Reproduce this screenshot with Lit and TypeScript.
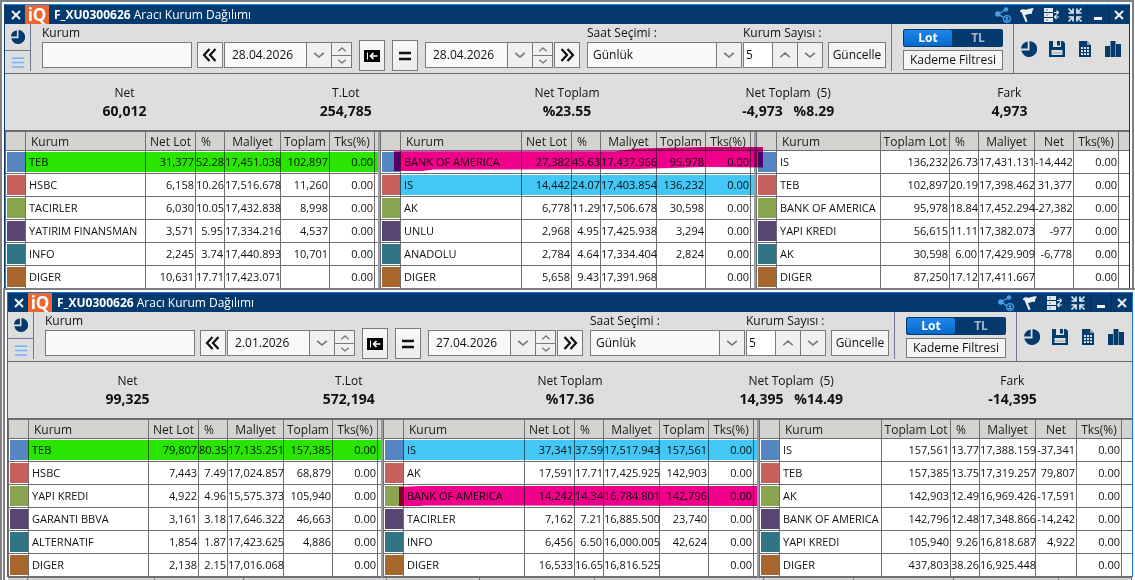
import { LitElement, html, svg, css } from "lit";
import { customElement, property } from "lit/decorators.js";
import { classMap } from "lit/directives/class-map.js";

type Mark = { row: number; shape: "green" | "cyan" | "pink" | "pink-brush" };
type Panel = { kind: "net" | "total"; netWidth: number; rows: string[][]; marks: Mark[] };
type Board = {
  id: string;
  start: string;
  end: string;
  summary: [string, string][];
  panels: Panel[];
};

const NET_HEADS = ["Kurum", "Net Lot", "%", "Maliyet", "Toplam", "Tks(%)"];
const TOTAL_HEADS = ["Kurum", "Toplam Lot", "%", "Maliyet", "Net", "Tks(%)"];
const SWATCHES = ["blue", "red", "green", "purple", "teal", "brown"];

const BOARDS: Board[] = [
  {
    id: "a",
    start: "28.04.2026",
    end: "28.04.2026",
    summary: [
      ["Net", "60,012"],
      ["T.Lot", "254,785"],
      ["Net Toplam", "%23.55"],
      ["Net Toplam  (5)", "-4,973   %8.29"],
      ["Fark", "4,973"],
    ],
    panels: [
      {
        kind: "net",
        netWidth: 0,
        marks: [{ row: 0, shape: "green" }],
        rows: [
          ["TEB", "31,377", "52.28", "17,451.038", "102,897", "0.00"],
          ["HSBC", "6,158", "10.26", "17,516.678", "11,260", "0.00"],
          ["TACIRLER", "6,030", "10.05", "17,432.838", "8,998", "0.00"],
          ["YATIRIM FINANSMAN", "3,571", "5.95", "17,334.216", "4,537", "0.00"],
          ["INFO", "2,245", "3.74", "17,440.893", "10,701", "0.00"],
          ["DIGER", "10,631", "17.71", "17,423.071", "", "0.00"],
        ],
      },
      {
        kind: "net",
        netWidth: 0,
        marks: [{ row: 0, shape: "pink-brush" }, { row: 1, shape: "cyan" }],
        rows: [
          ["BANK OF AMERICA", "27,382", "45.63", "17,437.966", "95,978", "0.00"],
          ["IS", "14,442", "24.07", "17,403.854", "136,232", "0.00"],
          ["AK", "6,778", "11.29", "17,506.678", "30,598", "0.00"],
          ["UNLU", "2,968", "4.95", "17,425.938", "3,294", "0.00"],
          ["ANADOLU", "2,784", "4.64", "17,334.404", "2,824", "0.00"],
          ["DIGER", "5,658", "9.43", "17,391.968", "", "0.00"],
        ],
      },
      {
        kind: "total",
        netWidth: 39,
        marks: [],
        rows: [
          ["IS", "136,232", "26.73", "17,431.131", "-14,442", "0.00"],
          ["TEB", "102,897", "20.19", "17,398.462", "31,377", "0.00"],
          ["BANK OF AMERICA", "95,978", "18.84", "17,452.294", "-27,382", "0.00"],
          ["YAPI KREDI", "56,615", "11.11", "17,382.073", "-977", "0.00"],
          ["AK", "30,598", "6.00", "17,429.909", "-6,778", "0.00"],
          ["DIGER", "87,250", "17.12", "17,411.667", "", "0.00"],
        ],
      },
    ],
  },
  {
    id: "b",
    start: "2.01.2026",
    end: "27.04.2026",
    summary: [
      ["Net", "99,325"],
      ["T.Lot", "572,194"],
      ["Net Toplam", "%17.36"],
      ["Net Toplam  (5)", "14,395   %14.49"],
      ["Fark", "-14,395"],
    ],
    panels: [
      {
        kind: "net",
        netWidth: 0,
        marks: [{ row: 0, shape: "green" }],
        rows: [
          ["TEB", "79,807", "80.35", "17,135.251", "157,385", "0.00"],
          ["HSBC", "7,443", "7.49", "17,024.857", "68,879", "0.00"],
          ["YAPI KREDI", "4,922", "4.96", "15,575.373", "105,940", "0.00"],
          ["GARANTI BBVA", "3,161", "3.18", "17,646.322", "46,663", "0.00"],
          ["ALTERNATIF", "1,854", "1.87", "17,423.625", "4,886", "0.00"],
          ["DIGER", "2,138", "2.15", "17,016.068", "", "0.00"],
        ],
      },
      {
        kind: "net",
        netWidth: 0,
        marks: [{ row: 0, shape: "cyan" }, { row: 2, shape: "pink" }],
        rows: [
          ["IS", "37,341", "37.59", "17,517.943", "157,561", "0.00"],
          ["AK", "17,591", "17.71", "17,425.925", "142,903", "0.00"],
          ["BANK OF AMERICA", "14,242", "14.34", "16,784.801", "142,796", "0.00"],
          ["TACIRLER", "7,162", "7.21", "16,885.500", "23,740", "0.00"],
          ["INFO", "6,456", "6.50", "16,000.005", "42,624", "0.00"],
          ["DIGER", "16,533", "16.65", "16,816.525", "", "0.00"],
        ],
      },
      {
        kind: "total",
        netWidth: 41,
        marks: [],
        rows: [
          ["IS", "157,561", "13.77", "17,388.159", "-37,341", "0.00"],
          ["TEB", "157,385", "13.75", "17,319.257", "79,807", "0.00"],
          ["AK", "142,903", "12.49", "16,969.426", "-17,591", "0.00"],
          ["BANK OF AMERICA", "142,796", "12.48", "17,348.866", "-14,242", "0.00"],
          ["YAPI KREDI", "105,940", "9.26", "16,818.687", "4,922", "0.00"],
          ["DIGER", "437,803", "38.26", "16,925.448", "", "0.00"],
        ],
      },
    ],
  },
];

const GLYPHS: Record<string, unknown> = {
  close: svg`<path d="M4 4l8 8M12 4l-8 8" stroke="#f2f5f8" stroke-width="2" fill="none"/>`,
  minus: svg`<path d="M4 10h8v3H4z" fill="#f2f5f8"/>`,
  share: svg`<path d="M3 7L10.500 2.800M3 7l7 4.500" stroke="#4a9fe8" stroke-width="1.300"/><g fill="#4a9fe8"><circle cx="2.800" cy="7" r="2.700"/><circle cx="11" cy="2.500" r="2.200"/></g><circle cx="12" cy="12" r="3.400" fill="#053a6e" stroke="#4a9fe8" stroke-width="1.300"/><circle cx="12" cy="11" r="1.300" fill="#4a9fe8"/><path d="M9.600 14.300c.4-2.300 4.400-2.300 4.800 0z" fill="#4a9fe8"/>`,
  flag: svg`<path d="M1 4C3.500 1 5.500 3.200 8 2.500 10.500 1.800 12 .6 15 1.600 13.500 3.400 12.800 5 13 7 10.500 6.200 8.500 7.800 6 8l2.600 6.300-2 .9L2.600 5.600C2.200 5 1.600 5 1 5.200z" fill="#e8edf2"/>`,
  server: svg`<g fill="#e4e9ee"><path d="M1 1h9v4H1zM1 6h9v4H1zM1 11h9v4H1z"/></g><path d="M11 5.500h4M13.500 3.500l2 2-2 2M16 10h-4M13.500 8l-2 2 2 2" stroke="#e4e9ee" stroke-width="1.200" fill="none"/><path d="M3 3h2M3 8h2M3 13h2" stroke="#6e8299" stroke-width="1.200"/>`,
  shrink: svg`<g stroke="#e4e9ee" stroke-width="1.700" fill="none"><path d="M1.500 1.500l4 4M14.500 1.500l-4 4M1.500 14.500l4-4M14.500 14.500l-4-4"/><path d="M6 1.500V6H1.500M10 1.500V6h4.500M6 14.500V10H1.500M10 14.500V10h4.500"/></g>`,
  pie: svg`<path d="M8.500 0a8 8 0 1 1-8.200 9.500h8.200z" fill="#053a6e"/><path d="M6.700.6v6.900H0A7.500 7.500 0 0 1 6.700.6z" fill="#053a6e"/>`,
  list: svg`<path d="M1 2.500h14M1 7.500h14M1 12.500h14" stroke="#6cb4fa" stroke-width="1.700"/>`,
  save: svg`<path d="M0 0h4v6h8V0h2l2 2v14H0z" fill="#053a6e"/><path d="M8 0h3v4.500H8z" fill="#053a6e"/><path d="M2.500 9h11v5h-11z" fill="#dedede"/><path d="M3.500 12h9" stroke="#8fa4b8"/>`,
  sheet: svg`<path d="M2 0h8l4 4v12H2z" fill="#053a6e"/><path d="M10 0v4h4z" fill="#8fa4b8"/><path d="M4 6h8v8H4z" fill="#dedede"/><path d="M6.500 6v8M9.500 6v8M4 8.500h8M4 11.500h8" stroke="#053a6e"/>`,
  bars: svg`<path d="M0 5h5v11H0zM5.500 0h5v16h-5zM11 3h5v13h-5z" fill="#053a6e"/>`,
  back: svg`<path d="M7.500 2L2 8l5.500 6M13.500 2L8 8l5.500 6" fill="none" stroke="#111" stroke-width="2.200"/>`,
  fwd: svg`<path d="M2.500 2L8 8l-5.500 6M8.500 2L14 8l-5.500 6" fill="none" stroke="#111" stroke-width="2.200"/>`,
  first: svg`<path d="M0 2h16v12H0z" fill="#000"/><path d="M3.500 4.500v7" stroke="#fff" stroke-width="1"/><path d="M13.500 8H7M9.500 5L6.500 8l3 3" stroke="#fff" stroke-width="1.700" fill="none"/>`,
  equal: svg`<path d="M2 5h12M2 11h12" stroke="#111" stroke-width="2.400"/>`,
  down: svg`<path d="M2.500 5.500Q5 7.500 8 10.300 11 7.500 13.500 5.500" fill="none" stroke="#777" stroke-width="1.900"/>`,
  up: svg`<path d="M2.500 10.500Q5 8.500 8 5.700 11 8.500 13.500 10.500" fill="none" stroke="#777" stroke-width="1.900"/>`,
};

const glyph = (name: string) =>
  html`<svg class="glyph" viewBox="0 0 16 16" aria-hidden="true">${GLYPHS[name]}</svg>`;

const base = css`
  * {
    box-sizing: border-box;
  }
  .glyph {
    display: block;
    width: 16px;
    height: 16px;
    flex: none;
  }
  button,
  input,
  select {
    font: inherit;
    color: inherit;
    margin: 0;
    padding: 0;
    border-radius: 0;
  }
`;

@customElement("broker-table")
export class BrokerTable extends LitElement {
  @property({ attribute: false }) panel!: Panel;

  static styles = [
    base,
    css`
      :host {
        display: block;
        position: relative;
        min-width: 0;
      }
      table {
        width: 100%;
        table-layout: fixed;
        border-collapse: separate;
        border-spacing: 0;
        border-left: 1px solid #6f6f73;
        background: #fff;
      }
      th,
      td {
        padding: 0;
        border-right: 1px solid #6f6f73;
        border-bottom: 1px solid #6f6f73;
        white-space: nowrap;
        font-weight: 400;
      }
      th:last-child,
      td:last-child {
        border-right: 0;
      }
      th {
        height: 19px;
        padding-top: 1px;
        line-height: 17px;
        font-size: 12px;
        background: #d5d3cf;
        color: #1c1c1c;
        text-align: center;
      }
      th.name,
      th.pct {
        text-align: left;
        padding-left: 5px;
      }
      td {
        height: 23px;
        line-height: 22px;
        font-size: 11px;
        text-align: right;
        color: #111;
      }
      td.name {
        text-align: left;
        padding-left: 3px;
      }
      td.num {
        padding-right: 1px;
      }
      td.swatch {
        padding: 1px 0 1px 1px;
      }
      .chip {
        display: block;
        height: 20px;
      }
      .blue { background: #5586c1; }
      .red { background: #c75f5c; }
      .green { background: #8aa54f; }
      .purple { background: #584573; }
      .teal { background: #317486; }
      .brown { background: #a8662f; }
      .c-swatch { width: 20px; }
      .c-net { width: 50px; }
      .c-total { width: 69px; }
      .c-pct { width: 29px; }
      .c-cost { width: 56px; }
      .c-sum { width: 49px; }
      .c-tks { width: 45px; }
      .c-rest { width: 3px; }
      .c-tail { width: 10px; }
      .mark {
        position: absolute;
        z-index: 1;
        left: 20px;
        right: 0;
        height: 20px;
        mix-blend-mode: multiply;
        pointer-events: none;
      }
      .m-green { background: #28e600; }
      .m-cyan { background: #43c8f5; }
      .m-pink {
        left: 16px;
        background: #ee008a;
        clip-path: polygon(0 5%, 22px 0, 100% 0, 100% 100%, 24px 97%, 22px 100%, 0 100%);
      }
      .m-brush {
        left: 14px;
        right: -9px;
        height: 24px;
        background: #ee008a;
        clip-path: polygon(0 18%, 60% 18%, 66% 6%, 84% 0, 100% 0, 100% 85%, 84% 83%, 66% 92%, 40px 94%, 28px 100%, 0 100%);
      }
    `,
  ];

  render() {
    const total = this.panel.kind === "total";
    const heads = total ? TOTAL_HEADS : NET_HEADS;
    return html`
      <table>
        <colgroup>
          <col class="c-swatch" />
          <col />
          <col class=${total ? "c-total" : "c-net"} />
          <col class="c-pct" />
          <col class="c-cost" />
          ${total ? html`<col style="width:${this.panel.netWidth}px" />` : html`<col class="c-sum" />`}
          <col class="c-tks" />
          <col class=${total ? "c-tail" : "c-rest"} />
        </colgroup>
        <thead>
          <tr>
            <th></th>
            ${heads.map((h, i) => html`<th scope="col" class=${i === 0 ? "name" : i === 2 ? "pct" : ""}>${h}</th>`)}
            <th></th>
          </tr>
        </thead>
        <tbody>
          ${this.panel.rows.map(
            (row, r) => html`<tr>
              <td class="swatch"><span class="chip ${SWATCHES[r]}"></span></td>
              ${row.map((c, i) => html`<td class=${i === 0 ? "name" : "num"}>${c}</td>`)}
              <td></td>
            </tr>`
          )}
        </tbody>
      </table>
      ${this.panel.marks.map((m) => {
        const brush = m.shape === "pink-brush";
        const top = 20 + m.row * 23 - (brush ? 5 : 0);
        return html`<div
          class=${classMap({
            mark: true,
            "m-green": m.shape === "green",
            "m-cyan": m.shape === "cyan",
            "m-pink": m.shape === "pink",
            "m-brush": brush,
          })}
          style="top:${top}px"
        ></div>`;
      })}
    `;
  }
}

@customElement("broker-window")
export class BrokerWindow extends LitElement {
  @property({ attribute: false }) board!: Board;

  static styles = [
    base,
    css`
      :host {
        display: block;
        background: #dedede;
        color: #111;
        font: 12px/18px "Open Sans", "Noto Sans", sans-serif;
      }
      .title {
        display: flex;
        align-items: center;
        height: 19px;
        padding-left: 1px;
        background: #053a6e;
        color: #fff;
      }
      .title button {
        display: grid;
        place-items: center;
        width: 24px;
        height: 19px;
        border: 0;
        background: none;
      }
      .title .edge {
        width: 21px;
        border-left: 1px solid #032a55;
      }
      .title .lead {
        width: 19px;
      }
      .logo {
        width: 24px;
        height: 19px;
        background: #ee6530;
        color: #fff;
        font: 700 17px/19px "Open Sans", sans-serif;
        text-align: center;
      }
      .title h1 {
        flex: 1;
        margin: 0;
        padding-left: 5px;
        font-size: 12px;
        font-weight: 400;
      }
      .title .actions {
        display: flex;
      }
      .bar {
        display: flex;
        height: 50px;
        border-bottom: 1px solid #6b6b70;
      }
      .rail {
        width: 26px;
        height: 47px;
        margin-right: 11px;
        border-right: 1px solid #6f7890;
      }
      .rail button {
        display: grid;
        place-items: center;
        width: 25px;
        height: 26px;
        border: 0;
        background: none;
      }
      .rail .glyph {
        width: 14px;
        height: 14px;
      }
      .rail button + button {
        height: 24px;
        border-top: 1px solid #6f7890;
      }
      .fields {
        display: flex;
        flex: 1;
        align-items: flex-end;
        gap: 7px;
        padding-bottom: 5px;
      }
      .group {
        display: flex;
        align-items: flex-end;
        gap: 1px;
      }
      .field {
        display: block;
      }
      .field.grow {
        flex: 1;
        min-width: 100px;
        margin-right: -2px;
      }
      .field label {
        display: block;
        height: 18px;
        white-space: nowrap;
      }
      .box {
        display: flex;
        height: 26px;
        border: 1px solid #7a7a7c;
        background: #f8f9fb;
      }
      .box input,
      .box select {
        flex: 1;
        min-width: 0;
        width: 100%;
        border: 0;
        outline: 0;
        background: none;
        appearance: none;
      }
      .date {
        width: 128px;
      }
      .date input {
        padding-left: 7px;
      }
      .hours {
        position: relative;
        width: 155px;
      }
      .hours select {
        padding-left: 5px;
      }
      .hours .cell {
        position: absolute;
        right: 0;
        top: 0;
        height: 24px;
        pointer-events: none;
      }
      .count {
        width: 80px;
        background: #fff;
      }
      .count input {
        padding-left: 2px;
      }
      .cell {
        display: grid;
        place-items: center;
        flex: none;
        width: 25px;
        border: 0;
        border-left: 1px solid #7a7a7c;
        background: #f0f0f0;
      }
      .spin {
        display: grid;
        grid-template-rows: 1fr 1fr;
        flex: none;
        width: 20px;
      }
      .spin .cell {
        width: 20px;
        overflow: hidden;
      }
      .spin .cell + .cell {
        border-top: 1px solid #7a7a7c;
      }
      .cell .glyph {
        width: 14px;
        height: 14px;
      }
      .spin .glyph {
        width: 12px;
        height: 11px;
      }
      .key {
        display: grid;
        place-items: center;
        flex: none;
        width: 26px;
        height: 26px;
        border: 1px solid #7a7a7c;
        background: #f5f5f6;
      }
      .key.tall {
        height: 31px;
        margin-bottom: -3px;
        background: linear-gradient(#fafafa, #ececec);
      }
      .key.wide {
        width: 58px;
        margin-left: 4px;
      }
      .mode {
        margin-left: 5px;
        height: 47px;
        padding: 5px 10px 0 11px;
        border-left: 1px solid #6f7890;
      }
      .toggle {
        display: grid;
        grid-template-columns: 1fr 1fr;
        width: 100px;
        height: 18px;
        margin-bottom: 3px;
        border-radius: 2px;
        background: #053a6e;
      }
      .toggle button {
        border: 0;
        background: none;
        color: #a9b8c8;
        font-weight: 700;
        line-height: 16px;
      }
      .toggle .on {
        margin: 1px;
        border-radius: 2px;
        color: #fff;
        background: linear-gradient(#2087ea, #0668cc);
      }
      .mode .filter {
        display: block;
        width: 100px;
        height: 20px;
        border: 1px solid #7a7a7c;
        background: #f5f5f6;
        line-height: 18px;
      }
      .tools {
        display: flex;
        align-items: center;
        gap: 12px;
        width: 116px;
        padding-left: 7px;
        border-left: 1px solid #6f7890;
      }
      .tools button {
        border: 0;
        background: none;
      }
      .summary {
        display: grid;
        grid-template-columns: repeat(5, 1fr);
        margin: 0;
        padding: 10px 9px;
        height: 56px;
        text-align: center;
        white-space: pre;
      }
      .summary dd {
        margin: 0;
        font-size: 14px;
        font-weight: 700;
      }
      .tables {
        display: grid;
        grid-template-columns: 375fr 376fr 373fr;
        border-top: 2px solid #6b6b70;
        background: #fff;
      }
      .split {
        min-width: 0;
        border-right: 2px solid #9a9da8;
      }
      .split.last {
        border-right: 0;
      }
    `,
  ];

  private dateBox(value: string, name: string) {
    return html`<div class="box date">
      <input type="text" .value=${value} aria-label=${name} />
      <button class="cell" aria-label="Takvim">${glyph("down")}</button>
      <div class="spin">
        <button class="cell" aria-label="Artır">${glyph("up")}</button>
        <button class="cell" aria-label="Azalt">${glyph("down")}</button>
      </div>
    </div>`;
  }

  render() {
    const b = this.board;
    return html`
      <header class="title">
        <button class="lead" aria-label="Kapat">${glyph("close")}</button>
        <span class="logo">iQ</span>
        <h1><b>F_XU0300626</b> Aracı Kurum Dağılımı</h1>
        <div class="actions">
          <button aria-label="Paylaş">${glyph("share")}</button>
          <button aria-label="İşaretle">${glyph("flag")}</button>
          <button aria-label="Sunucu">${glyph("server")}</button>
          <button aria-label="Daralt">${glyph("shrink")}</button>
          <button class="edge" aria-label="Küçült">${glyph("minus")}</button>
          <button class="edge" aria-label="Pencereyi kapat">${glyph("close")}</button>
        </div>
      </header>
      <div class="bar">
        <div class="rail">
          <button aria-label="Grafik">${glyph("pie")}</button>
          <button aria-label="Liste">${glyph("list")}</button>
        </div>
        <div class="fields">
          <div class="field grow">
            <label for="firm">Kurum</label>
            <div class="box"><input id="firm" type="text" /></div>
          </div>
          <div class="group">
            <button class="key" aria-label="Önceki">${glyph("back")}</button>
            ${this.dateBox(b.start, "Başlangıç")}
          </div>
          <button class="key tall" aria-label="Başa dön">${glyph("first")}</button>
          <button class="key tall" aria-label="Eşitle">${glyph("equal")}</button>
          <div class="group">
            ${this.dateBox(b.end, "Bitiş")}
            <button class="key" aria-label="Sonraki">${glyph("fwd")}</button>
          </div>
          <div class="group">
            <div class="field">
              <label for="hours">Saat Seçimi :</label>
              <div class="box hours">
                <select id="hours"><option>Günlük</option></select>
                <span class="cell">${glyph("down")}</span>
              </div>
            </div>
            <div class="field">
              <label for="count">Kurum Sayısı :</label>
              <div class="box count">
                <input id="count" type="text" inputmode="numeric" .value=${"5"} />
                <button class="cell" aria-label="Artır">${glyph("up")}</button>
                <button class="cell" aria-label="Azalt">${glyph("down")}</button>
              </div>
            </div>
            <button class="key wide">Güncelle</button>
          </div>
        </div>
        <div class="mode">
          <div class="toggle">
            <button class="on" aria-pressed="true">Lot</button>
            <button aria-pressed="false">TL</button>
          </div>
          <button class="filter">Kademe Filtresi</button>
        </div>
        <div class="tools">
          <button aria-label="Pasta grafik">${glyph("pie")}</button>
          <button aria-label="Kaydet">${glyph("save")}</button>
          <button aria-label="Tablo">${glyph("sheet")}</button>
          <button aria-label="Çubuk grafik">${glyph("bars")}</button>
        </div>
      </div>
      <dl class="summary">${b.summary.map(([k, v]) => html`<div><dt>${k}</dt><dd>${v}</dd></div>`)}</dl>
      <div class="tables">
        ${b.panels.map(
          (p, i) => html`<div class=${classMap({ split: true, last: i === 2 })}>
            <broker-table .panel=${p}></broker-table>
          </div>`
        )}
      </div>
    `;
  }
}

@customElement("app-root")
export class AppRoot extends LitElement {
  static styles = css`
    :host {
      display: block;
      height: 100vh;
      overflow: hidden;
      background: #fff;
    }
    .desk {
      box-sizing: border-box;
      border-left: 2px solid #808084;
    }
    .pane {
      display: flow-root;
      border-top: 2px solid #808084;
      background: #fff;
    }
    .first {
      margin-right: 1px;
      padding: 2px 2px 0;
      border-right: 2px solid #808084;
    }
    .second {
      margin: -1px 0 0 1px;
      padding: 2px 2px 0;
      border-left: 2px solid #808084;
      position: relative;
    }
    broker-window {
      border: 1px solid #053a6e;
      border-top-color: #1e88e5;
      border-bottom: 0;
    }
    .second broker-window {
      border-color: #1273d4;
    }
    .more {
      display: grid;
      grid-template-columns: 20fr 126fr 88fr 141fr 92fr 114fr 168fr 89fr 99fr 104fr 72fr;
      height: 8px;
      margin: 0 1px;
      background: #d5d3cf;
      border-top: 1px solid #6f6f73;
    }
    .more span {
      border-right: 1px solid #6f6f73;
    }
  `;

  render() {
    return html`<main class="desk">
      <section class="pane first"><broker-window .board=${BOARDS[0]}></broker-window></section>
      <section class="pane second">
        <broker-window .board=${BOARDS[1]}></broker-window>
        <div class="more">${Array.from({ length: 11 }, () => html`<span></span>`)}</div>
      </section>
    </main>`;
  }
}
